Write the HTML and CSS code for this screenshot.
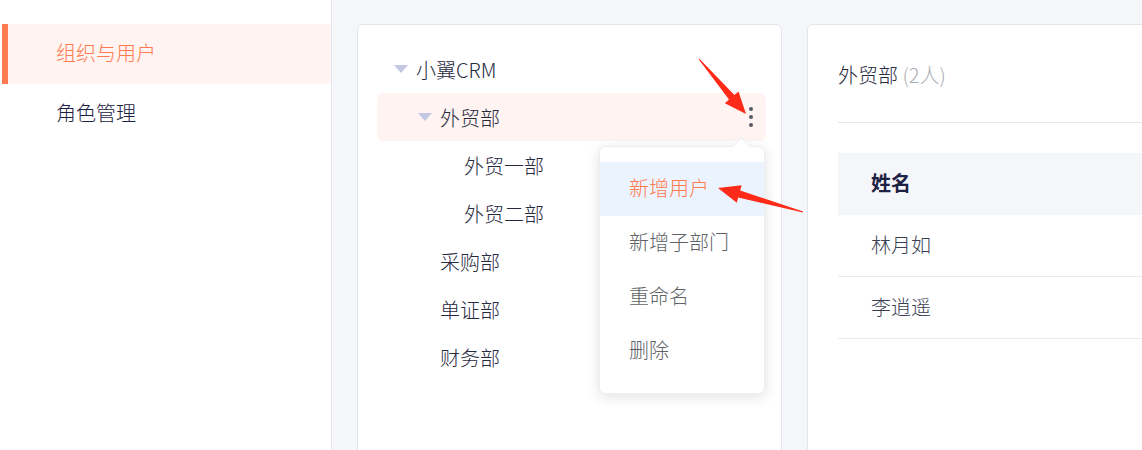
FILE: index.html
```html
<!DOCTYPE html>
<html lang="zh-CN">
<head>
    <meta charset="UTF-8">
    <meta name="viewport" content="width=device-width, initial-scale=1.0">
    <title>组织与用户</title>
    <link rel="stylesheet" href="styles.css">
</head>
<body>
    <div class="sidebar">
        <div class="menu-item active">组织与用户</div>
        <div class="menu-item">角色管理</div>
    </div>

    <div class="main">
        <div class="card tree-card">
            <div class="tree">
                <div class="node lv0"><span class="caret"></span>小翼CRM</div>
                <div class="node lv1 selected">
                    <span class="caret"></span>外贸部
                    <span class="more"><i></i><i></i><i></i></span>
                    <div class="dropdown">
                        <div class="drop-item hover">新增用户</div>
                        <div class="drop-item">新增子部门</div>
                        <div class="drop-item">重命名</div>
                        <div class="drop-item">删除</div>
                    </div>
                </div>
                <div class="node lv2"><span class="leaf"></span>外贸一部</div>
                <div class="node lv2"><span class="leaf"></span>外贸二部</div>
                <div class="node lv1"><span class="leaf"></span>采购部</div>
                <div class="node lv1"><span class="leaf"></span>单证部</div>
                <div class="node lv1"><span class="leaf"></span>财务部</div>
            </div>
        </div>

        <div class="card user-card">
            <div class="card-title">外贸部 <span class="count">(2人)</span></div>
            <div class="table">
                <div class="tr th">姓名</div>
                <div class="tr">林月如</div>
                <div class="tr">李逍遥</div>
            </div>
        </div>
    </div>

    <!-- annotation arrows -->
    <svg class="marks" width="1142" height="450" viewBox="0 0 1142 450">
        <polygon fill="#ff2a17" points="698.6,59.3 729,99.6 724.9,103.2 746,114 738.5,91.5 734.4,95 699.4,58.7"/>
        <polygon fill="#ff2a17" points="803.1,211.5 740.2,190.6 741.6,185.3 718,188 736.8,202.7 738.2,197.4 802.9,212.5"/>
    </svg>
</body>
</html>
```

FILE: styles.css
```css
* {
    box-sizing: border-box;
    margin: 0;
    padding: 0;
}

body {
    font-family: 'Noto Sans CJK SC', 'Noto Sans', sans-serif;
    font-weight: 300;
    width: 1142px;
    height: 450px;
    overflow: hidden;
    display: flex;
    position: relative;
    color: #262a40;
    background: #fff;
}

.sidebar {
    width: 332px;
    flex-shrink: 0;
    padding-top: 24px;
    border-right: 1px solid #e4e6ed;
    background: #fff;
}

.menu-item {
    height: 60px;
    line-height: 58px;
    margin-left: 2px;
    padding-left: 54px;
    font-size: 20px;
    color: #1d2142;
}

.menu-item.active {
    border-left: 6px solid #ff7a4f;
    padding-left: 48px;
    background: #fff4f2;
    color: #ff7a4f;
}

.main {
    flex: 1;
    display: flex;
    gap: 25px;
    padding: 24px 0 0 25px;
    background: #f5f6fa;
    overflow: hidden;
}

.card {
    background: #fff;
    border: 1px solid #e3e5ec;
    border-radius: 6px;
    height: 460px;
    flex-shrink: 0;
}

.tree-card {
    width: 425px;
    padding: 20px 15px 0 19px;
}

.node {
    position: relative;
    display: flex;
    align-items: center;
    height: 48px;
    font-size: 20px;
    color: #262a40;
    border-radius: 6px;
}

.lv0 { padding-left: 17px; }
.lv1 { padding-left: 41px; }
.lv2 { padding-left: 65px; }

.caret {
    width: 22px;
    flex-shrink: 0;
    height: 8px;
    position: relative;
}

.caret::before {
    content: "";
    position: absolute;
    left: 0;
    top: 0;
    border-left: 7px solid transparent;
    border-right: 7px solid transparent;
    border-top: 8px solid #c4c7e2;
}

.leaf {
    width: 22px;
    flex-shrink: 0;
}

.node.selected {
    background: #fff4f1;
}

.more {
    position: absolute;
    right: 13px;
    top: 14px;
    display: flex;
    flex-direction: column;
    gap: 4px;
}

.more i {
    width: 4px;
    height: 4px;
    border-radius: 50%;
    background: #555a66;
}

.dropdown {
    position: absolute;
    top: 53px;
    right: 1px;
    width: 166px;
    padding: 15px 0;
    background: #fff;
    border: 1px solid #eceef3;
    border-radius: 6px;
    box-shadow: 0 3px 14px rgba(0, 0, 0, 0.12);
    z-index: 5;
}

.dropdown::before {
    content: "";
    position: absolute;
    top: -7px;
    right: 16px;
    width: 12px;
    height: 12px;
    background: #fff;
    border-left: 1px solid #eceef3;
    border-top: 1px solid #eceef3;
    transform: rotate(45deg);
}

.drop-item {
    height: 54px;
    line-height: 52px;
    padding-left: 29px;
    font-size: 20px;
    color: #606266;
    position: relative;
}

.drop-item.hover {
    background: #ebf3fe;
    color: #ff7a4f;
}

.user-card {
    width: 420px;
    padding: 0 0 0 30px;
}

.card-title {
    padding: 36px 0 34px;
    line-height: 27px;
    font-size: 20px;
    color: #262a40;
    border-bottom: 1px solid #e4e6eb;
}

.count {
    color: #aaadb5;
}

.table {
    margin-top: 30px;
}

.tr {
    height: 62px;
    line-height: 60px;
    padding-left: 33px;
    font-size: 20px;
    color: #3a3e52;
    border-bottom: 1px solid #e8e9ee;
}

.tr.th {
    height: 62px;
    background: #f5f6fa;
    border-bottom: none;
    font-weight: bold;
    color: #1d2142;
}

.marks {
    position: absolute;
    left: 0;
    top: 0;
    pointer-events: none;
    z-index: 10;
}
```
